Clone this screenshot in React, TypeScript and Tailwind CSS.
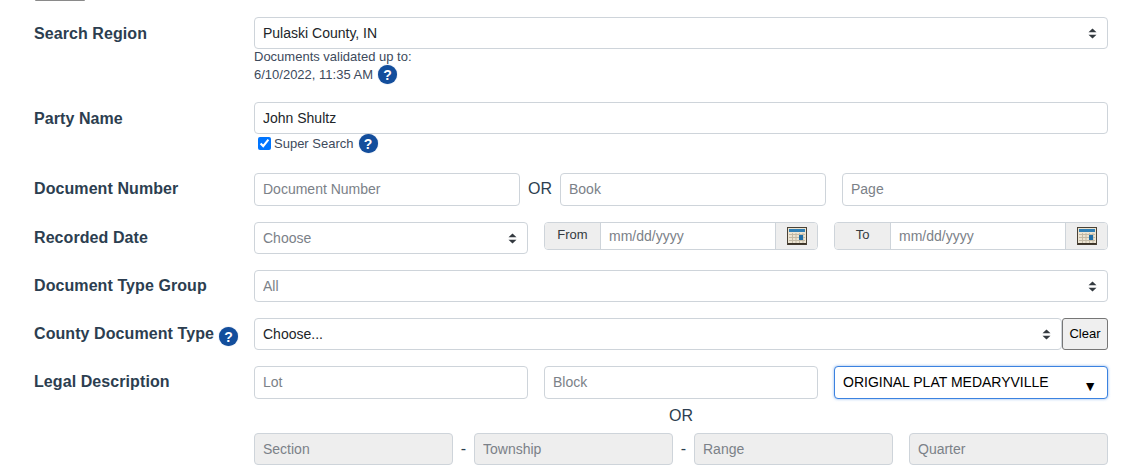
import type { ReactNode } from 'react'

const field =
  'w-full rounded border border-[#ced4da] bg-white px-2 text-sm text-[#212529] placeholder:text-[#7b8188] outline-none'
const disabledField =
  'h-8 w-[199px] rounded border border-[#ced4da] bg-[#eeeeee] px-2 text-sm placeholder:text-[#7b8188] outline-none'

function HelpIcon() {
  return (
    <span className="inline-flex h-[19px] w-[19px] shrink-0 items-center justify-center rounded-full bg-[#134e9c] text-sm leading-none font-bold text-white shadow-[0_0_1px_#5a7fb5]">
      ?
    </span>
  )
}

function UpDown() {
  return (
    <svg className="pointer-events-none absolute top-[11px] right-[11px]" width="9" height="11" viewBox="0 0 9 11">
      <path d="M4.5 0.5 L8.5 4.2 H0.5 Z M4.5 10.5 L0.5 6.8 H8.5 Z" fill="#343a40" />
    </svg>
  )
}

function Select({ value, muted, className }: { value: string; muted?: boolean; className?: string }) {
  return (
    <div className={`relative ${className ?? 'w-full'}`}>
      <select
        defaultValue={value}
        className={`h-8 w-full appearance-none rounded border border-[#ced4da] bg-white px-2 text-sm outline-none ${muted ? 'text-[#7b8188]' : 'text-[#212529]'}`}
      >
        <option>{value}</option>
      </select>
      <UpDown />
    </div>
  )
}

function CalendarIcon() {
  return (
    <svg width="20" height="18" viewBox="0 0 20 18">
      <rect x="0.5" y="0.5" width="19" height="17" fill="#ece4d2" stroke="#4a4236" />
      <rect x="2" y="2" width="16" height="3" fill="#2f7fb5" />
      <path d="M2 7.5 H18 M2 10.5 H18 M2 13.5 H18 M5.5 6 V16 M9 6 V16 M12.5 6 V16 M16 6 V16" stroke="#c3baa6" strokeWidth="1" />
      <rect x="12" y="8" width="4" height="5" fill="#1f6fa8" />
      <rect x="1" y="16" width="18" height="1.5" fill="#3b3328" />
    </svg>
  )
}

function DateGroup({ label }: { label: string }) {
  return (
    <div className="flex h-7 w-full overflow-hidden rounded border border-[#ced4da] text-[13px]">
      <span className="flex w-[56px] shrink-0 items-center justify-center border-r border-[#ced4da] bg-[#eeeeee] pb-[2px] text-[#343a40]">
        {label}
      </span>
      <input placeholder="mm/dd/yyyy" className="w-full min-w-0 bg-white px-2 text-sm placeholder:text-[#7b8188] outline-none" />
      <span className="flex w-[42px] shrink-0 items-center justify-center border-l border-[#ced4da] bg-[#eeeeee]">
        <CalendarIcon />
      </span>
    </div>
  )
}

function Row({ label, help, className, children }: { label: string; help?: boolean; className?: string; children: ReactNode }) {
  return (
    <div className={`flex items-start ${className ?? ''}`}>
      <div className="flex h-8 w-[220px] shrink-0 items-center gap-[5px] pt-[1px] text-base font-bold tracking-[0.08px] text-[#2c3e50]">
        {label}
        {help && <span className="mt-[5px] flex"><HelpIcon /></span>}
      </div>
      <div className="min-w-0 flex-1">{children}</div>
    </div>
  )
}

export default function App() {
  return (
    <div className="h-[469px] overflow-hidden bg-white pr-[25px] pl-[34px] font-['Liberation_Sans',sans-serif] text-[#2c3e50]">
      <div className="ml-px h-px w-[50px] rounded-b bg-[#8a8a8a]" />

      <Row label="Search Region" className="mt-4">
        <Select value="Pulaski County, IN" />
        <p className="text-[13px] leading-[15px] text-[#3d4a5c]">Documents validated up to:</p>
        <p className="flex h-[21px] items-center gap-[5px] text-[13px] text-[#3d4a5c]">
          6/10/2022, 11:35 AM <HelpIcon />
        </p>
      </Row>

      <Row label="Party Name" className="mt-[17px]">
        <input defaultValue="John Shultz" className={`${field} h-8`} />
        <label className="ml-1 flex items-center gap-[3px] text-[13px] text-[#3d4a5c]">
          <input type="checkbox" defaultChecked className="m-0 h-[13px] w-[13px] accent-[#0075ff]" />
          Super Search
          <span className="ml-[2px] flex"><HelpIcon /></span>
        </label>
      </Row>

      <Row label="Document Number" className="mt-[19px]">
        <div className="flex items-center">
          <input placeholder="Document Number" className={`${field} h-[33px] !w-[266px] shrink-0`} />
          <span className="w-10 shrink-0 text-center text-base">OR</span>
          <input placeholder="Book" className={`${field} h-[33px] !w-[266px] shrink-0`} />
          <input placeholder="Page" className={`${field} ml-4 h-[33px] !w-[266px] shrink-0`} />
        </div>
      </Row>

      <Row label="Recorded Date" className="mt-4">
        <div className="grid grid-cols-3 items-start gap-4">
          <Select value="Choose" muted />
          <DateGroup label="From" />
          <DateGroup label="To" />
        </div>
      </Row>

      <Row label="Document Type Group" className="mt-4">
        <Select value="All" muted />
      </Row>

      <Row label="County Document Type" help className="mt-4">
        <div className="flex">
          <Select value="Choose..." className="flex-1" />
          <button className="h-8 w-[46px] shrink-0 rounded-[3px] border border-[#767676] bg-[#efefef] text-[13px] text-black">
            Clear
          </button>
        </div>
      </Row>

      <Row label="Legal Description" className="mt-4">
        <div className="grid grid-cols-3 gap-4">
          <input placeholder="Lot" className={`${field} h-[33px]`} />
          <input placeholder="Block" className={`${field} h-[33px]`} />
          <div className="relative">
            <input
              defaultValue="ORIGINAL PLAT MEDARYVILLE"
              className={`${field} h-[33px] !border-[#3b82e0] shadow-[0_0_3px_rgba(59,130,224,0.6)] !text-black`}
            />
            <span className="pointer-events-none absolute top-[13px] right-[11px] text-[14px] leading-none text-black">▼</span>
          </div>
        </div>
        <p className="mt-[5px] text-center text-base leading-6 text-[#2c3e50]">OR</p>
        <div className="mt-[5px] flex items-center">
          <input disabled placeholder="Section" className={disabledField} />
          <span className="w-[21px] text-center text-base">-</span>
          <input disabled placeholder="Township" className={disabledField} />
          <span className="w-[21px] text-center text-base">-</span>
          <input disabled placeholder="Range" className={disabledField} />
          <input disabled placeholder="Quarter" className={`${disabledField} ml-4`} />
        </div>
      </Row>
    </div>
  )
}
